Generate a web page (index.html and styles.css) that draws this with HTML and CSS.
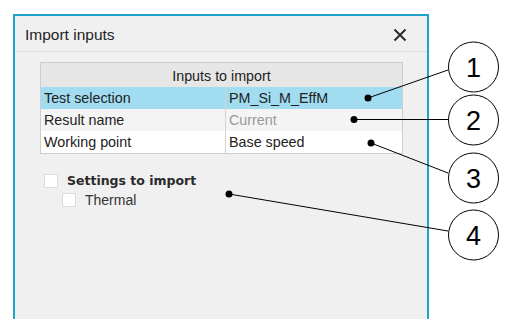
FILE: index.html
```
<!DOCTYPE html>
<html lang="en">
<head>
    <meta charset="UTF-8">
    <title>Import inputs</title>
    <link rel="stylesheet" href="styles.css">
</head>
<body>

<div class="dialog">
    <div class="title-bar">
        <span class="title">Import inputs</span>
        <button class="close-btn" aria-label="Close">
            <svg width="14" height="14" viewBox="0 0 14 14">
                <path d="M1.5 1.5 L12.5 12.5 M12.5 1.5 L1.5 12.5" stroke="#2b2b2b" stroke-width="2" fill="none"/>
            </svg>
        </button>
    </div>

    <div class="dialog-body">
        <table class="inputs-table">
            <thead>
                <tr><th colspan="2">Inputs to import</th></tr>
            </thead>
            <tbody>
                <tr class="selected">
                    <td>Test selection</td>
                    <td>PM_Si_M_EffM</td>
                </tr>
                <tr class="alt">
                    <td>Result name</td>
                    <td class="muted">Current</td>
                </tr>
                <tr>
                    <td>Working point</td>
                    <td>Base speed</td>
                </tr>
            </tbody>
        </table>

        <div class="settings">
            <label class="check-row main">
                <span class="box"></span>
                <span>Settings to import</span>
            </label>
            <label class="check-row sub">
                <span class="box"></span>
                <span>Thermal</span>
            </label>
        </div>
    </div>
</div>

<!-- callouts drawn on top of the screenshot -->
<svg class="callouts" width="518" height="319" viewBox="0 0 518 319">
    <g stroke="#000" stroke-width="1" fill="none">
        <line x1="368" y1="98" x2="448" y2="70"/>
        <line x1="354" y1="119.5" x2="448" y2="119.5"/>
        <line x1="371" y1="143" x2="448" y2="173"/>
        <line x1="229" y1="194" x2="448" y2="231"/>
    </g>
    <g fill="#000">
        <circle cx="368" cy="98" r="3.5"/>
        <circle cx="354" cy="119.5" r="3.5"/>
        <circle cx="371" cy="143" r="3.5"/>
        <circle cx="229" cy="194" r="3.5"/>
    </g>
    <g stroke="#000" stroke-width="1" fill="#fff">
        <circle cx="473.5" cy="67" r="25"/>
        <circle cx="473.5" cy="120" r="25"/>
        <circle cx="473.5" cy="178" r="25"/>
        <circle cx="473.5" cy="235" r="25"/>
    </g>
    <g class="callout-num" text-anchor="middle">
        <text x="473.5" y="76.5">1</text>
        <text x="473.5" y="129.5">2</text>
        <text x="473.5" y="187.5">3</text>
        <text x="473.5" y="244.5">4</text>
    </g>
</svg>

</body>
</html>
```

FILE: styles.css
```
body {
    margin: 0;
    padding: 0;
    background-color: #fff;
    font-family: "Liberation Sans", Arial, sans-serif;
    color: #222;
    overflow: hidden;
}

.dialog {
    margin: 14px 0 0 13px;
    width: 412px;
    height: 310px;
    border: 2px solid #1fa3ca;
    border-bottom: none;
    background-color: #f0f0f0;
}

.title-bar {
    display: flex;
    align-items: center;
    justify-content: space-between;
    height: 35px;
    padding: 0 20px 0 10px;
    border-bottom: 1px solid #dadada;
}
.title {
    font-size: 15.5px;
    color: #222;
    padding-top: 3px;
}
.close-btn {
    background: none;
    border: none;
    padding: 0;
    margin-top: 3px;
    display: flex;
}

.dialog-body {
    padding: 10px 24px 0 25px;
}

.inputs-table {
    width: 363px;
    border-collapse: collapse;
    border: 1px solid #cdcdcd;
    font-size: 14.3px;
}
.inputs-table th {
    height: 23px;
    font-weight: normal;
    background-color: #e6e6e6;
    color: #222;
    padding: 0;
    padding-top: 1px;
}
.inputs-table td {
    height: 22px;
    padding: 0 0 0 3px;
    background-color: #fff;
    line-height: 22px;
}
.inputs-table td:first-child {
    width: 181px;
    border-right: 1px solid #d4d4d4;
}
.inputs-table tr.selected td {
    background-color: #a1dcf1;
}
.inputs-table tr.alt td {
    background-color: #f4f4f4;
}
.inputs-table td.muted {
    color: #999;
}

.settings {
    margin-top: 19px;
    display: flex;
    flex-direction: column;
    gap: 4px;
}
.check-row {
    display: flex;
    align-items: center;
    gap: 9px;
    height: 15px;
}
.check-row .box {
    width: 12px;
    height: 12px;
    background-color: #fff;
    border: 1px solid #dcdcdc;
}
.check-row.main {
    margin-left: 4px;
    font-family: "DejaVu Sans", sans-serif;
    font-weight: bold;
    font-size: 12.5px;
    color: #2a2a2a;
}
.check-row.sub {
    margin-left: 22px;
    font-size: 14px;
    color: #333;
}

.callouts {
    position: absolute;
    left: 0;
    top: 0;
}
.callout-num {
    font-family: "Liberation Sans", Arial, sans-serif;
    font-size: 27px;
    fill: #000;
}
```
